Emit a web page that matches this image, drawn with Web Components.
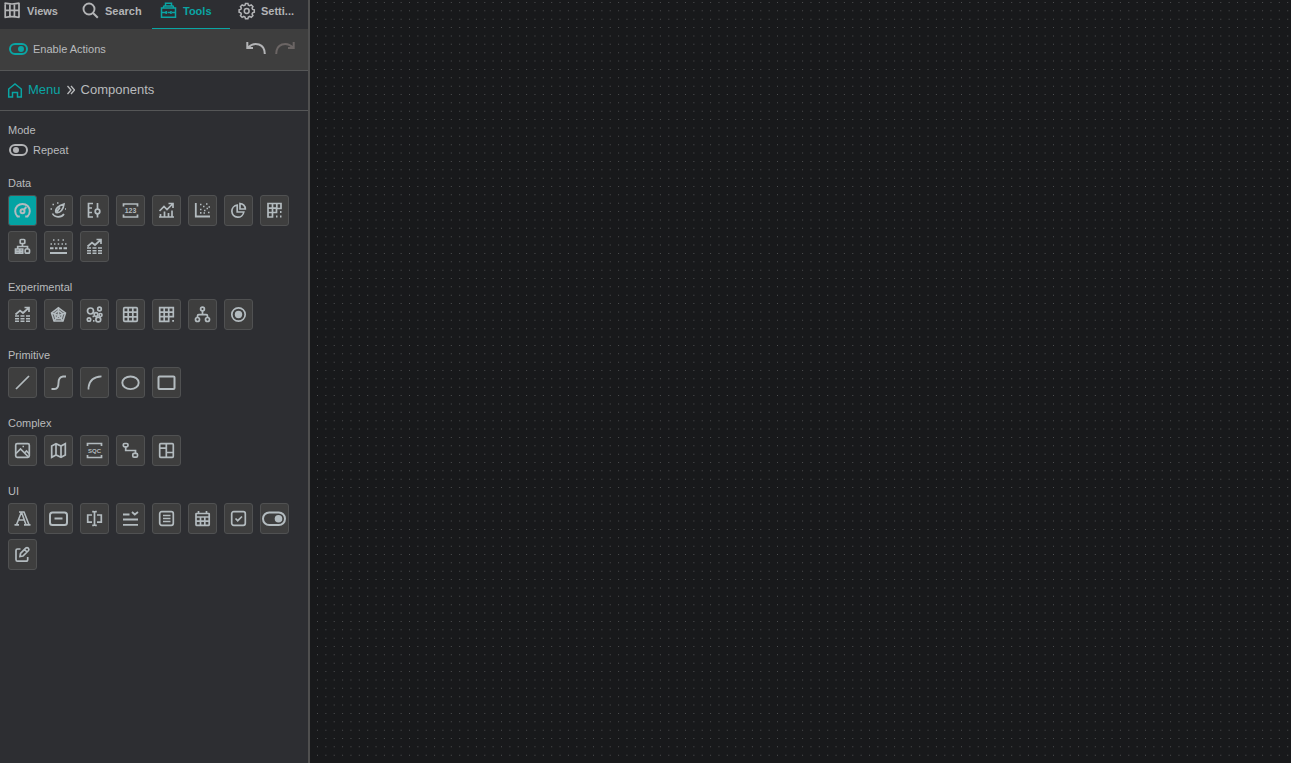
<!DOCTYPE html>
<html lang="en">
<head>
<meta charset="utf-8">
<title>Components</title>
<style>
html, body { margin: 0; height: 100%; background: #18191b; }
body { font: 11px/16px "Liberation Sans", Arial, sans-serif; color: #b9bbbd; }
</style>
</head>
<body>
<view-editor>
  <tool-panel slot="panel">
    <panel-tabs slot="tabs">
      <panel-tab icon="views">Views</panel-tab>
      <panel-tab icon="search">Search</panel-tab>
      <panel-tab icon="tools" active>Tools</panel-tab>
      <panel-tab icon="settings">Setti...</panel-tab>
    </panel-tabs>
    <action-bar slot="actions"><toggle-switch checked>Enable Actions</toggle-switch></action-bar>
    <bread-crumb slot="path">Components</bread-crumb>
    <tool-section heading="Mode"><toggle-switch>Repeat</toggle-switch></tool-section>
    <tool-section heading="Data">
      <tool-button icon="gauge" label="Gauge" active></tool-button>
      <tool-button icon="dial" label="Dial"></tool-button>
      <tool-button icon="scale" label="Linear scale"></tool-button>
      <tool-button icon="number" label="Value"></tool-button>
      <tool-button icon="chart" label="Chart"></tool-button>
      <tool-button icon="scatter" label="Scatter plot"></tool-button>
      <tool-button icon="pie" label="Pie chart"></tool-button>
      <tool-button icon="pivot" label="Pivot table"></tool-button>
      <tool-button icon="hierarchy" label="Hierarchy"></tool-button>
      <tool-button icon="density" label="Density"></tool-button>
      <tool-button icon="trend" label="Trend table"></tool-button>
    </tool-section>
    <tool-section heading="Experimental">
      <tool-button icon="trend" label="Trend"></tool-button>
      <tool-button icon="radar" label="Radar chart"></tool-button>
      <tool-button icon="bubbles" label="Bubbles"></tool-button>
      <tool-button icon="grid" label="Grid"></tool-button>
      <tool-button icon="gridDot" label="Extended grid"></tool-button>
      <tool-button icon="nodes" label="Nodes"></tool-button>
      <tool-button icon="radio" label="Radio button"></tool-button>
    </tool-section>
    <tool-section heading="Primitive">
      <tool-button icon="line" label="Line"></tool-button>
      <tool-button icon="curve" label="Curve"></tool-button>
      <tool-button icon="arc" label="Arc"></tool-button>
      <tool-button icon="ellipse" label="Ellipse"></tool-button>
      <tool-button icon="rect" label="Rectangle"></tool-button>
    </tool-section>
    <tool-section heading="Complex">
      <tool-button icon="image" label="Image"></tool-button>
      <tool-button icon="map" label="Map"></tool-button>
      <tool-button icon="sqc" label="Quality control"></tool-button>
      <tool-button icon="flow" label="Flow"></tool-button>
      <tool-button icon="layout" label="Layout"></tool-button>
    </tool-section>
    <tool-section heading="UI">
      <tool-button icon="letter" label="Text"></tool-button>
      <tool-button icon="button" label="Button"></tool-button>
      <tool-button icon="input" label="Text input"></tool-button>
      <tool-button icon="dropdown" label="Drop-down"></tool-button>
      <tool-button icon="list" label="List"></tool-button>
      <tool-button icon="calendar" label="Date picker"></tool-button>
      <tool-button icon="check" label="Checkbox"></tool-button>
      <tool-button icon="switch" label="Switch"></tool-button>
      <tool-button icon="edit" label="Form"></tool-button>
    </tool-section>
  </tool-panel>
  <dot-canvas slot="canvas"></dot-canvas>
</view-editor>

<script>
const ICONS = {
  gauge: '<g stroke-width="2"><path d="M5.5 16.5A7.300 7.300 0 1 1 15.500 16.5"/><circle cx="10.500" cy="11.300" r="2"/><path d="M11.800 9.800L14.300 7M5 16.500h2.800M13.200 16.500H16"/></g>',
  dial: '<path d="M8 12.500C6.500 8.500 11 5.500 16 4C15.500 9 12.500 13.500 8 12.500zM9 11.500l3-4M4.500 13.500C6.500 17.800 13.500 17.800 16 14"/><path d="M4.500 4.500h1.500M9 3h1.500M2.500 9H4M17 9h1" />',
  scale: '<path d="M9 3.500H4.500v13.500H9M4.500 8H8M4.500 12.500H8M13.500 3v6.500M13.500 14v3.500"/><circle cx="13.500" cy="11.500" r="2.300"/>',
  number: '<path d="M3.500 6.500v-2.500h14v2.500M3.500 14.500v2.500h14v-2.500"/><text x="10.500" y="13" font-size="7">123</text>',
  sqc: '<path d="M3.500 6v-2.500h14v2.500M3.500 15v2.500h14v-2.500"/><text x="10.500" y="13" font-size="6">SQC</text>',
  chart: '<path d="M3 17h15M4.500 17v-3M8.500 17v-5.500M12.500 17v-4M16 17v-6.500M3.500 11L8 6.500l3 3 5.500-5.500M12.500 3.500H17V8"/>',
  scatter: '<path d="M3.800 3v13.500H18" stroke-width="1.800"/><path d="M8 4.500h1.500M14 4h1.500M11 6.500h1.500M16.500 7H18M8 9.500h1.500M14.500 8.500H16M12 10.500h1.500M8 12.800h1.500M16 12.500h1.500M11.500 13H13"/>',
  pie: '<path d="M9.200 5.200A6 6 0 1 0 15.800 12H9.200z"/><path d="M12 3.500v5.500h5.300A5.500 5.500 0 0 0 12 3.500z"/>',
  pivot: '<path d="M4 3.500H17V8.500H12.500V12.500H8.500V17H4zM4 8.200h9M4 12.500h5M8.500 3.500V13M12.800 3.500V9"/><path d="M16 12h1.500M12 16.500h1.500M16 16.500h1.500" stroke-width="2"/>',
  hierarchy: '<rect x="8.200" y="3.500" width="4.600" height="4" rx=".8"/><path d="M10.500 7.500v3M5.700 13v-2.500h9.800V13"/><path d="M3.500 13h4.200v4.200H3.500zM3.500 15.100h7M7.700 13h3v4.200h-3z"/><rect x="13.200" y="13" width="4.300" height="4.200" rx="1"/>',
  density: '<path d="M5 4h1.500M9.700 4h1.500M14.500 4H16M2.500 8H4M6 8h1.500M9.700 8h1.500M13.500 8H15M17 8h1.500"/><path d="M2 12.300h3.500M7 12.300h2.500M11 12.300h3M15.500 12.300H19M2 17h17" stroke-width="1.900"/>',
  trend: '<path d="M3.500 10.500l4.500-4 3 2.500 5.500-5M12.500 3.500H17V8"/><path d="M3 12h4M8.500 12h4M14 12h4M3 14.700h4M8.500 14.700h4M14 14.700h4M3 17.300h4M8.500 17.300h4M14 17.300h4" stroke-width="1.500"/>',
  radar: '<g stroke-width="1.500"><path d="M10.500 3.800L17.500 9 15 17H6L3.500 9z" fill="currentColor" fill-opacity=".3"/><path d="M10.500 6.500L14.700 9.700 13.300 14.500H7.700L6.300 9.700zM10.500 3.500v8M3.500 9l7 2.500 7-2.500M6 17l4.500-5.500L15 17"/></g>',
  bubbles: '<circle cx="6.500" cy="7" r="3"/><circle cx="15.500" cy="5" r="1.800"/><circle cx="12" cy="10.500" r="1.800"/><circle cx="16.500" cy="11" r="1.500"/><circle cx="5" cy="15.500" r="1.700"/><circle cx="14.300" cy="15.500" r="2.400"/><path d="M8.500 12.500H10M9 16.800h1.500"/>',
  grid: '<rect x="3.700" y="3.700" width="13.600" height="13.600" rx="1"/><path d="M3.500 8.200h14M3.500 12.800h14M8.200 3.500v14M12.800 3.500v14"/>',
  gridDot: '<path d="M3.700 3.700H17.300V12.700H12.700V17.300H3.700zM3.700 8.200h13.600M3.700 12.700h9M8.200 3.700v13.600M12.700 3.700v9"/><path d="M16.200 16.800H18" stroke-width="1.800"/>',
  nodes: '<circle cx="10.500" cy="5" r="1.900"/><circle cx="5.500" cy="15.500" r="2"/><circle cx="15.500" cy="15.500" r="2"/><path d="M10.500 7v3.500M5.500 13.500v-1.500q0-1.300 1.300-1.300h7.400q1.300 0 1.300 1.300v1.500"/>',
  radio: '<circle cx="10.500" cy="10.500" r="6.700"/><circle class="fill" cx="10.500" cy="10.500" r="3.700"/>',
  line: '<path d="M4 17L17 4"/>',
  curve: '<path d="M3.500 17H6.500Q10.500 17 10.500 11T15 4.500h3" stroke-width="1.900"/>',
  arc: '<path d="M4.500 17.500V15.500Q5.500 5 17.500 4.300"/>',
  ellipse: '<ellipse cx="10.500" cy="10.800" rx="8.200" ry="6.300" stroke-width="1.900"/>',
  rect: '<rect x="2.500" y="4.500" width="16" height="12.500" rx="1" stroke-width="2"/>',
  image: '<rect x="3.700" y="3.700" width="13.600" height="13.600" rx="1.500"/><path d="M4 13.500l4.500-4.500 8 8M12.500 13l2-2 3 3M10.500 6.500H12"/>',
  map: '<path d="M3.700 6L8 3.700l5 2.300 4.300-2.300V15L13 17.300 8 15l-4.300 2.300zM8 4v11M13 6v11"/>',
  flow: '<rect x="3.300" y="3.500" width="4.700" height="3.400" rx="1.300"/><path d="M5.700 7v3.500h9.800V13"/><rect x="12.800" y="13.300" width="4.700" height="3.900" rx="1.300"/>',
  layout: '<rect x="3.700" y="3.700" width="13.600" height="13.600" rx="1"/><path d="M10.300 3.700v13.600M3.700 8.200h6.600M10.300 12.500h7"/>',
  letter: '<path d="M4.500 16.800L9.500 4H12l5 12.800M9.800 5l4.200 11.800M6.500 12h6M2.500 16.900H7M12 16.900h6.500M7 4h5" stroke-width="1.600"/>',
  button: '<rect x="2" y="4.500" width="17" height="12.500" rx="2.500" stroke-width="2"/><path d="M6.500 10.500H14.500" stroke-width="2"/>',
  input: '<path d="M8 7H3.700v7.200H8M13 7h4.300v7.200H13M8.200 3.700h1.300q1 0 1 1 0-1 1-1h1.300M10.500 4.500v12M8.200 17.300h1.300q1 0 1-1 0 1 1 1h1.300"/>',
  dropdown: '<path d="M3 6.500h6.500M12 4l2.800 2.500L18 4M3 11.500h15M3 16.800h15" stroke-width="1.800"/>',
  list: '<rect x="3.700" y="3.700" width="13.600" height="13.600" rx="2"/><path d="M7 7.500h7.500M7 10.500h7.500M7 13.500h7.500"/>',
  calendar: '<rect x="4" y="5.500" width="13.200" height="11.800" rx=".5"/><path d="M6.500 3v3M14.500 3v3M4 9h13M4 13.200h13M8.500 9v8M12.800 9v8"/>',
  check: '<rect x="3.700" y="3.700" width="13.600" height="13.600" rx="2"/><path d="M7.500 10.500l2.200 2.200L14 8.500"/>',
  switch: '<rect x="-1" y="4.500" width="22" height="12.500" rx="6.250" stroke-width="2"/><circle class="fill" cx="14.500" cy="10.700" r="3.800"/>',
  edit: '<path d="M8.500 5H5.500Q4 5 4 6.500V15.500Q4 17.200 5.500 17.200h8.500Q15.700 17.200 15.700 15.500V13M8 12.500l.5-3 5.500-5.500q1-.8 2 0l.5.500q.8 1 0 2L11 12zM12.500 5.500l2.500 2.500"/>',
  views: '<path d="M2.500 3.200q7.500 1.600 15 0M2.500 17.500q7.500-1.600 15 0M3.200 3v14.500M17 3v14.500M7.900 3.500v13.500M12.400 3.500v13.500M3 10.300h14"/>',
  search: '<circle cx="9" cy="9" r="5.500" stroke-width="1.900"/><path d="M13 13l4.800 4.800" stroke-width="2"/>',
  tools: '<path d="M3.500 8h14v9.200h-14zM5 8l1-2h9l1 2M7.500 6V3.200h6V6M3.500 12.500h4M9.500 12.500h3M14 12.500h3.500M8.200 11v3M13 11v3" stroke-width="1.500"/>',
  settings: '<g transform="translate(2.300 2.200) scale(.8)" stroke-width="1.900"><path d="M9 1.500h3l.6 2.200 1.600.7 2-1.100 2.100 2.100-1.100 2 .7 1.600 2.100.6v3l-2.100.6-.7 1.600 1.100 2-2.100 2.100-2-1.100-1.600.7-.6 2.100H9l-.6-2.100-1.600-.7-2 1.100-2.100-2.100 1.100-2-.7-1.600L1 12.600v-3L3.100 9l.7-1.600-1.100-2 2.100-2.100 2 1.100 1.600-.7z"/><circle cx="10.500" cy="11" r="3"/></g>'
};

// Each fragment is filled in before it joins the shadow root, so nested elements find their attributes set.
const define = (name, html, setup) => {
  const template = document.createElement('template');
  template.innerHTML = html;
  customElements.define(name, class extends HTMLElement {
    connectedCallback() {
      if (this.shadowRoot) return;
      const content = template.content.cloneNode(true);
      if (setup) setup(this, content);
      this.attachShadow({ mode: 'open' }).append(content);
    }
  });
};

define('tool-icon', `
  <style>
    :host { display: block; width: 21px; height: 21px; flex: none; }
    svg { display: block; overflow: visible; fill: none; stroke: currentColor; stroke-width: 1.7; }
    text { fill: currentColor; stroke: none; font-family: "Liberation Sans", Arial, sans-serif; font-weight: bold; text-anchor: middle; }
    .fill { fill: currentColor; stroke: none; }
  </style>
  <svg width="21" height="21" viewBox="0 0 21 21" aria-hidden="true"></svg>`,
  (el, root) => { root.querySelector('svg').innerHTML = ICONS[el.getAttribute('name')]; });

define('view-editor', `
  <style>
    :host { display: flex; min-height: 100vh; }
    ::slotted([slot=canvas]) { flex: 1; min-width: 0; }
  </style>
  <slot name="panel"></slot><slot name="canvas"></slot>`);

define('tool-panel', `
  <style>
    :host { display: flex; flex-direction: column; box-sizing: border-box; width: 310px; flex: none; background: #2d2e32; border-right: 2px solid #4f4f4f; }
    .sections { display: flex; flex-direction: column; gap: 17px; padding: 11px 8px; }
  </style>
  <slot name="tabs"></slot><slot name="actions"></slot><slot name="path"></slot>
  <div class="sections"><slot></slot></div>`);

define('panel-tabs', `
  <style>
    :host { display: block; overflow: hidden; }
    div { display: flex; margin-left: -4px; }
    ::slotted(*) { flex: 1; min-width: 0; }
  </style>
  <div role="tablist"><slot></slot></div>`);

define('panel-tab', `
  <style>
    :host { display: block; }
    button { display: flex; align-items: center; gap: 4px; box-sizing: border-box; width: 100%; height: 29px; padding: 0 4px 7px 6px; border: 0; border-bottom: 1px solid transparent; background: none; color: #b3b4b6; font: bold 11px/16px "Liberation Sans", Arial, sans-serif; text-align: left; white-space: nowrap; }
    button[aria-selected=true] { color: #0aa5a4; border-color: #0aa5a4; }
  </style>
  <button role="tab"><tool-icon></tool-icon><span><slot></slot></span></button>`,
  (el, root) => {
    root.querySelector('tool-icon').setAttribute('name', el.getAttribute('icon'));
    root.querySelector('button').setAttribute('aria-selected', el.hasAttribute('active'));
  });

define('toggle-switch', `
  <style>
    :host { display: block; }
    label { display: flex; align-items: center; gap: 5px; padding-left: 1px; }
    input { appearance: none; box-sizing: border-box; display: flex; align-items: center; width: 19px; height: 12px; margin: 0; padding: 0 2px; border: 2px solid currentColor; border-radius: 6px; color: #b3b4b6; }
    input::before { content: ""; width: 6px; height: 6px; border-radius: 3px; background: currentColor; }
    input:checked { justify-content: flex-end; color: #0aa5a4; }
  </style>
  <label><input type="checkbox" role="switch"><span><slot></slot></span></label>`,
  (el, root) => { root.querySelector('input').checked = el.hasAttribute('checked'); });

define('action-bar', `
  <style>
    :host { display: flex; align-items: center; box-sizing: border-box; height: 42px; padding: 0 13px 2px 8px; background: #3e3e3e; border-bottom: 1px solid #555657; }
    .history { display: flex; gap: 9px; margin-left: auto; }
    button { padding: 0; border: 0; background: none; color: #b3b4b6; }
    button:disabled { color: #6b6564; }
    svg { display: block; fill: none; stroke: currentColor; stroke-width: 2; }
  </style>
  <slot></slot>
  <div class="history">
    <button aria-label="Undo"><svg width="20" height="14" viewBox="0 0 20 14"><path d="M1.300 0v6H7M2 5.500Q7 .5 13 2.500 18.800 4.500 18.800 12"/></svg></button>
    <button aria-label="Redo" disabled><svg width="20" height="14" viewBox="0 0 20 14"><path d="M18.700 0v6H13M18 5.500Q13 .5 7 2.500 1.200 4.500 1.200 12"/></svg></button>
  </div>`);

define('bread-crumb', `
  <style>
    :host { display: block; box-sizing: border-box; height: 40px; border-bottom: 1px solid #555657; font-size: 13px; }
    nav { display: flex; align-items: center; gap: 6px; height: 37px; padding-left: 7px; }
    a { display: flex; align-items: center; gap: 5px; color: #0aa5a4; text-decoration: none; }
    svg { display: block; fill: none; stroke: currentColor; }
  </style>
  <nav aria-label="Breadcrumb">
    <a href="#menu"><svg width="16" height="16" viewBox="0 0 16 16" stroke-width="1.500"><path d="M1.700 7L8 2l6.300 5v8H10.500V10.500h-5V15H1.700z"/></svg>Menu</a>
    <svg width="8" height="10" viewBox="0 0 8 10" stroke-width="1.300"><path d="M.5 1L4 5 .5 9M4 1L7.500 5 4 9"/></svg>
    <span aria-current="page"><slot></slot></span>
  </nav>`);

define('tool-section', `
  <style>
    :host { display: block; }
    h2 { margin: 0 0 4px; font: inherit; }
    div { display: flex; flex-wrap: wrap; gap: 5px 7px; }
  </style>
  <section><h2></h2><div><slot></slot></div></section>`,
  (el, root) => { root.querySelector('h2').textContent = el.getAttribute('heading'); });

define('tool-button', `
  <style>
    :host { display: block; }
    button { display: flex; align-items: center; justify-content: center; box-sizing: border-box; width: 29px; height: 31px; padding: 0; border: 1px solid #505152; border-radius: 3px; background: #3e3e3e; color: #b3bbbf; }
    button[aria-pressed=true] { background: #03a3a3; }
  </style>
  <button><tool-icon></tool-icon></button>`,
  (el, root) => {
    const button = root.querySelector('button');
    button.setAttribute('aria-label', el.getAttribute('label'));
    button.setAttribute('aria-pressed', el.hasAttribute('active'));
    root.querySelector('tool-icon').setAttribute('name', el.getAttribute('icon'));
  });

// The snap grid has eleven dots for every 92 pixels of canvas.
define('dot-canvas', `
  <style>
    :host { display: grid; background: #18191b; }
    svg { display: block; width: 100%; height: 100%; }
  </style>
  <svg aria-hidden="true">
    <defs><pattern id="dots" x="7" y="2" width="92" height="92" patternUnits="userSpaceOnUse"><path fill="#4c4d4f"/></pattern></defs>
    <rect width="100%" height="100%" fill="url(#dots)"/>
  </svg>`,
  (el, root) => {
    let d = '';
    for (let row = 0; row < 11; row++)
      for (let col = 0; col < 11; col++)
        d += `M${col * 92 / 11} ${row * 92 / 11}h1v1h-1z`;
    root.querySelector('path').setAttribute('d', d);
  });
</script>
</body>
</html>
